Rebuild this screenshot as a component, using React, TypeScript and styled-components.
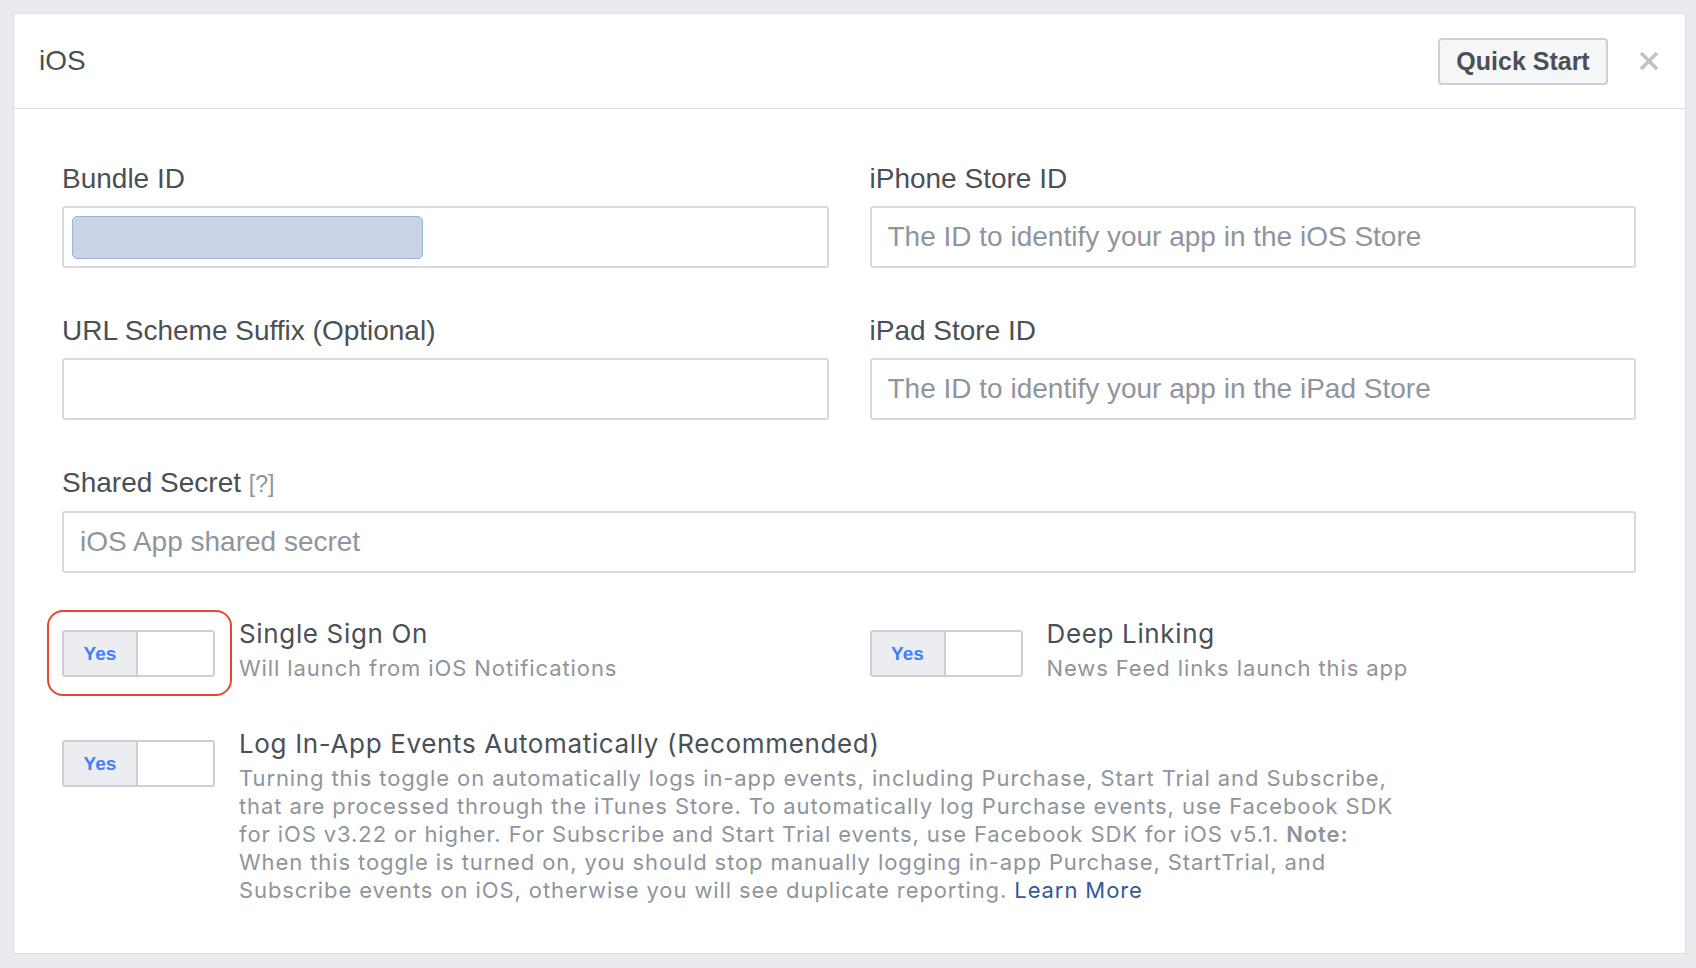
import React from 'react'
import styled, { createGlobalStyle } from 'styled-components'

const GlobalStyle = createGlobalStyle`
  * {
    box-sizing: border-box;
  }
  body {
    margin: 0;
    background-color: #e9ebee;
    font-family: 'Liberation Sans', Arial, sans-serif;
    color: #4b4f56;
  }
`

const Page = styled.div`
  padding: 13px 10px 15px 13px;
`

const Panel = styled.section`
  background-color: #fff;
  border: 1px solid #dddfe2;
`

const Header = styled.header`
  display: flex;
  align-items: center;
  height: 95px;
  padding: 0 26px 0 25px;
  border-bottom: 1px solid #dddfe2;
`

const Title = styled.h1`
  flex: 1;
  margin: 0;
  font-size: 28px;
  font-weight: normal;
  color: #4b4f56;
`

const QuickStartButton = styled.button`
  width: 170px;
  height: 47px;
  border: 2px solid #ccd0d5;
  border-radius: 4px;
  background-color: #f5f6f7;
  font-family: 'Liberation Sans', Arial, sans-serif;
  font-size: 25px;
  font-weight: bold;
  color: #4b4f56;
  cursor: pointer;
`

const CloseButton = styled.button`
  display: flex;
  margin-left: 31px;
  padding: 0;
  border: none;
  background: none;
  cursor: pointer;
`

const Body = styled.div`
  display: flex;
  flex-direction: column;
  gap: 45px;
  padding: 54px 49px 49px 48px;
`

const FieldList = styled.div`
  display: flex;
  flex-direction: column;
  gap: 47px;
`

const SwitchList = styled.div`
  display: flex;
  flex-direction: column;
  gap: 46px;
`

const TwoCol = styled.div`
  display: grid;
  grid-template-columns: 1fr 1fr;
  column-gap: 41px;
`

const Field = styled.div`
  display: flex;
  flex-direction: column;
`

const Label = styled.label`
  font-size: 28px;
  line-height: 32px;
  color: #4b4f56;
  margin-bottom: 11px;
`

const Hint = styled.span`
  font-size: 23px;
  color: #90949c;
`

const TextInput = styled.input`
  width: 100%;
  height: 62px;
  padding: 0 16px;
  border: 2px solid #d6d9dd;
  border-radius: 3px;
  font-family: 'Liberation Sans', Arial, sans-serif;
  font-size: 28px;
  color: #4b4f56;
  outline: none;

  &::placeholder {
    color: #90949c;
    opacity: 1;
  }
`

const TokenBox = styled.div`
  display: flex;
  align-items: center;
  height: 62px;
  padding: 0 8px;
  border: 2px solid #d6d9dd;
  border-radius: 3px;
`

const Token = styled.span`
  width: 351px;
  height: 43px;
  border: 1px solid #9cb4d8;
  border-radius: 5px;
  background-color: #c8d4e6;
`

const ToggleRow = styled.div`
  display: flex;
  align-items: flex-start;
  gap: 24px;
`

const Toggle = styled.div<{ $highlight?: boolean }>`
  position: relative;
  display: flex;
  flex: none;
  width: 153px;
  height: 47px;
  margin-top: 12px;
  border: 2px solid #ccd0d5;
  border-radius: 3px;
  background-color: #fff;

  ${({ $highlight }) =>
    $highlight &&
    `
    &::before {
      content: '';
      position: absolute;
      top: -22px;
      right: -19px;
      bottom: -21px;
      left: -17px;
      border: 2.5px solid #e8462f;
      border-radius: 16px;
      pointer-events: none;
    }
  `}
`

const ToggleOn = styled.span`
  display: flex;
  align-items: center;
  justify-content: center;
  width: 74px;
  border-right: 2px solid #ccd0d5;
  background-color: #ebedf0;
  font-size: 19px;
  font-weight: bold;
  color: #4080ff;
`

const ToggleText = styled.div`
  display: flex;
  flex-direction: column;
  font-family: Inter, 'Liberation Sans', sans-serif;
`

const ToggleTitle = styled.span`
  font-size: 26px;
  line-height: 32px;
  letter-spacing: 0.65px;
  color: #4b4f56;
`

const ToggleSub = styled.span`
  margin-top: 4px;
  font-size: 22px;
  line-height: 28px;
  letter-spacing: 0.9px;
  color: #90949c;
  white-space: nowrap;

  b {
    font-weight: 600;
  }

  a {
    color: #365899;
    text-decoration: none;
  }
`

const CloseIcon = () => (
  <svg width="20" height="20" viewBox="0 0 20 20">
    <path d="M2 2 L18 18 M18 2 L2 18" stroke="#bec3c9" strokeWidth="3.6" />
  </svg>
)

interface ISwitchRowProps {
  title: string
  children: React.ReactNode
  highlight?: boolean
}

const SwitchRow = ({ title, children, highlight }: ISwitchRowProps) => (
  <ToggleRow>
    <Toggle $highlight={highlight}>
      <ToggleOn>Yes</ToggleOn>
    </Toggle>
    <ToggleText>
      <ToggleTitle>{title}</ToggleTitle>
      <ToggleSub>{children}</ToggleSub>
    </ToggleText>
  </ToggleRow>
)

export default function App() {
  return (
    <Page>
      <GlobalStyle />
      <Panel>
        <Header>
          <Title>iOS</Title>
          <QuickStartButton>Quick Start</QuickStartButton>
          <CloseButton aria-label="Close">
            <CloseIcon />
          </CloseButton>
        </Header>
        <Body>
          <FieldList>
            <TwoCol>
              <Field>
                <Label>Bundle ID</Label>
                <TokenBox>
                  <Token />
                </TokenBox>
              </Field>
              <Field>
                <Label>iPhone Store ID</Label>
                <TextInput placeholder="The ID to identify your app in the iOS Store" />
              </Field>
            </TwoCol>
            <TwoCol>
              <Field>
                <Label>URL Scheme Suffix (Optional)</Label>
                <TextInput />
              </Field>
              <Field>
                <Label>iPad Store ID</Label>
                <TextInput placeholder="The ID to identify your app in the iPad Store" />
              </Field>
            </TwoCol>
            <Field>
              <Label>
                Shared Secret <Hint>[?]</Hint>
              </Label>
              <TextInput placeholder="iOS App shared secret" />
            </Field>
          </FieldList>
          <SwitchList>
            <TwoCol>
              <SwitchRow title="Single Sign On" highlight>
                Will launch from iOS Notifications
              </SwitchRow>
              <SwitchRow title="Deep Linking">News Feed links launch this app</SwitchRow>
            </TwoCol>
            <SwitchRow title="Log In-App Events Automatically (Recommended)">
              Turning this toggle on automatically logs in-app events, including Purchase, Start Trial and Subscribe,
              <br />
              that are processed through the iTunes Store. To automatically log Purchase events, use Facebook SDK
              <br />
              for iOS v3.22 or higher. For Subscribe and Start Trial events, use Facebook SDK for iOS v5.1. <b>Note:</b>
              <br />
              When this toggle is turned on, you should stop manually logging in-app Purchase, StartTrial, and
              <br />
              Subscribe events on iOS, otherwise you will see duplicate reporting. <a href="#">Learn More</a>
            </SwitchRow>
          </SwitchList>
        </Body>
      </Panel>
    </Page>
  )
}
